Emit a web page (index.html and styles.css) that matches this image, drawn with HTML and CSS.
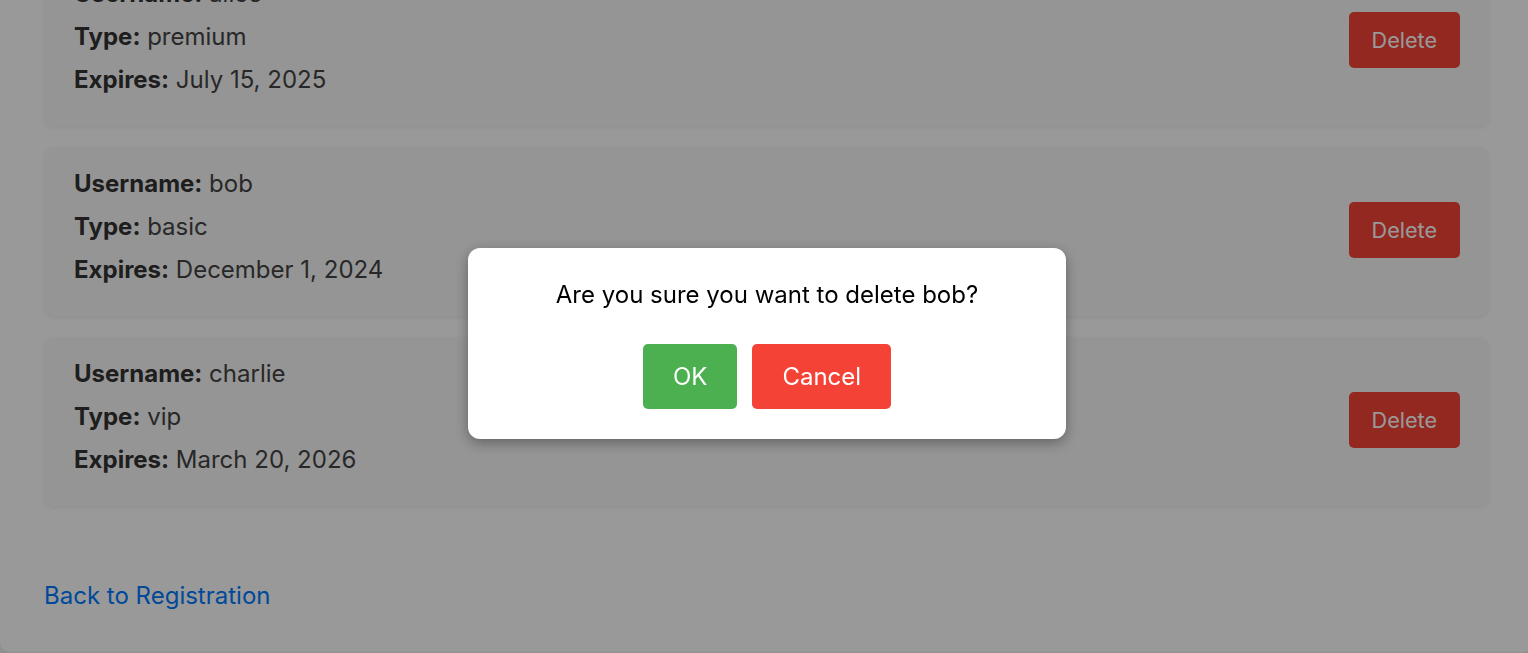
FILE: index.html
```html
<!DOCTYPE html>
<html lang="en">
<head>
<meta charset="utf-8">
<title>Users</title>
<link rel="stylesheet" href="styles.css">
</head>
<body>
<div class="container">
  <div class="list">
    <div class="card">
      <div class="info">
        <p><strong>Username:</strong> alice</p>
        <p><strong>Type:</strong> premium</p>
        <p><strong>Expires:</strong> July 15, 2025</p>
      </div>
      <button class="delete">Delete</button>
    </div>
    <div class="card">
      <div class="info">
        <p><strong>Username:</strong> bob</p>
        <p><strong>Type:</strong> basic</p>
        <p><strong>Expires:</strong> December 1, 2024</p>
      </div>
      <button class="delete">Delete</button>
    </div>
    <div class="card">
      <div class="info">
        <p><strong>Username:</strong> charlie</p>
        <p><strong>Type:</strong> vip</p>
        <p><strong>Expires:</strong> March 20, 2026</p>
      </div>
      <button class="delete">Delete</button>
    </div>
  </div>
  <a class="back" href="#">Back to Registration</a>
</div>
<div class="overlay">
  <div class="modal">
    <p class="question">Are you sure you want to delete bob?</p>
    <div class="actions">
      <button class="btn ok">OK</button>
      <button class="btn cancel">Cancel</button>
    </div>
  </div>
</div>
</body>
</html>
```
FILE: styles.css
```css
html, body {
  margin: 0;
  padding: 0;
  height: 100%;
  overflow: hidden;
}
body {
  background: #f0f0f0;
  font-family: Inter, "Noto Sans", sans-serif;
  color: #333;
}
.container {
  background: #fff;
  border-radius: 10px;
  width: calc(100% + 5px);
  box-sizing: border-box;
  padding: 0 44px 40px;
  margin-top: -43px;
}
.list {
  display: flex;
  flex-direction: column;
  gap: 21px;
}
.card {
  background: #f9f9f9;
  border-radius: 10px;
  box-shadow: 0 2px 4px rgba(0,0,0,0.06);
  padding: 20px 29px 20px 30px;
  display: flex;
  justify-content: space-between;
  align-items: center;
}
.info p {
  margin: 0 0 10px;
  font-size: 24px;
  line-height: 33px;
  color: #444;
}
.info strong {
  color: #333;
  font-weight: 700;
}
.delete {
  font-family: inherit;
  font-size: 21.6px;
  line-height: 26px;
  padding: 15px 23px;
  margin-bottom: 4px;
  border: none;
  border-radius: 5px;
  background: #f44336;
  color: #fff;
}
.back {
  display: inline-block;
  margin-top: 73px;
  font-size: 24px;
  line-height: 33px;
  color: #007bff;
  text-decoration: none;
}
.overlay {
  position: fixed;
  inset: 0;
  background: rgba(0,0,0,0.4);
  display: flex;
  justify-content: center;
  align-items: flex-start;
  padding-top: 248px;
  padding-left: 6px;
}
.modal {
  width: 598px;
  box-sizing: border-box;
  background: #fff;
  border-radius: 12px;
  padding: 30px;
  text-align: center;
  box-shadow: 0 4px 14px rgba(0,0,0,0.35);
}
.question {
  margin: 0 0 33px;
  font-size: 24px;
  line-height: 33px;
  color: #000;
}
.actions {
  display: flex;
  justify-content: center;
  gap: 15px;
}
.btn {
  font-family: inherit;
  font-size: 24px;
  line-height: 27px;
  padding: 19px 30px;
  border: none;
  border-radius: 5px;
  color: #fff;
}
.ok { background: #4caf50; }
.cancel { background: #f44336; }
```
